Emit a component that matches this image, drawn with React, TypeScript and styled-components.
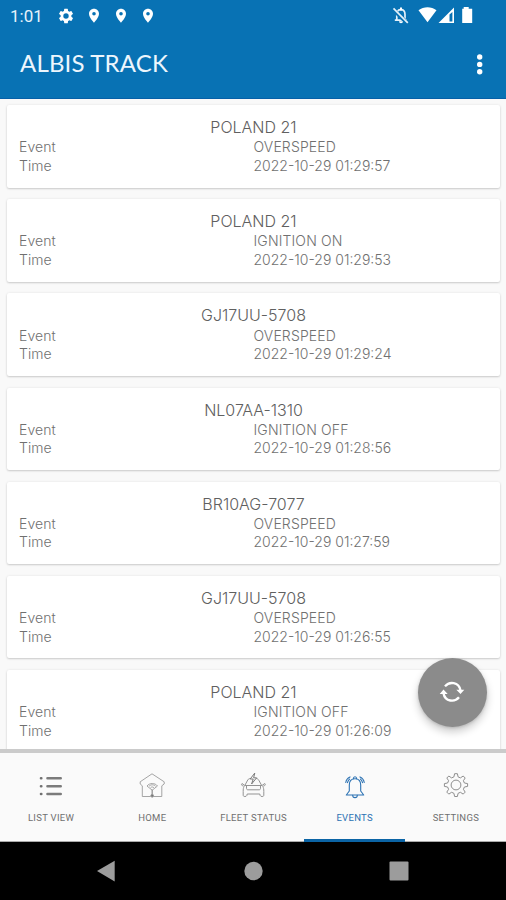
import React from 'react';
import styled, { createGlobalStyle } from 'styled-components';

const GlobalStyle = createGlobalStyle`
  * { box-sizing: border-box; }
  body { margin: 0; background: #000; font-family: Inter, "Open Sans", sans-serif; }
`;

const Screen = styled.div`
  position: relative;
  width: 506px;
  height: 900px;
  display: flex;
  flex-direction: column;
  overflow: hidden;
  background: #f9f9f9;
`;

const Header = styled.header`
  flex: 0 0 99px;
  background: #0872b4;
  border-bottom: 1px solid #0660a8;
  color: #fff;
`;

const StatusBar = styled.div`
  height: 32px;
  display: flex;
  align-items: center;
  padding: 0 32px 0 10px;
`;

const Clock = styled.span`
  width: 47px;
  font: 400 17px/32px Roboto, sans-serif;
  color: #e6f3fb;
`;

const StatusLeft = styled.div`
  display: flex;
  align-items: center;
  gap: 11px;
  flex: 1;
`;

const StatusRight = styled.div`
  display: flex;
  align-items: center;
`;

const TitleBar = styled.div`
  height: 66px;
  display: flex;
  align-items: center;
  justify-content: space-between;
  padding: 0 22px 2px 20px;
`;

const Title = styled.h1`
  margin: 0;
  padding-bottom: 2px;
  font: 400 24px/30px Lato, sans-serif;
  letter-spacing: 0.17px;
  color: #edf6fd;
`;

const List = styled.main`
  flex: 1 1 0;
  min-height: 0;
  overflow: hidden;
  padding: 6px 6px 0 7px;
  display: flex;
  flex-direction: column;
  gap: 11.7px;
`;

const Card = styled.article`
  flex: 0 0 82.5px;
  padding: 12px 12px 0;
  border-radius: 2px;
  background: #fff;
  box-shadow: 0 1px 2px rgba(0, 0, 0, 0.17), 0 0 3px rgba(0, 0, 0, 0.07);
`;

const CardTitle = styled.h2`
  margin: 0;
  height: 21.2px;
  font: 300 16px/21px Inter, sans-serif;
  text-align: center;
  color: #606060;
`;

const Row = styled.div`
  display: grid;
  grid-template-columns: 234.5px 1fr;
  height: 18.5px;
  font: 300 14px/18.5px Inter, sans-serif;
  color: #707070;
`;

const Cell = styled.span<{ $spacing?: number }>`
  letter-spacing: ${(p) => p.$spacing ?? 0}px;
  white-space: nowrap;
`;

const RefreshButton = styled.button`
  position: absolute;
  left: 418px;
  top: 658px;
  width: 69px;
  height: 69px;
  padding: 0 1px 1px 0;
  border: 0;
  border-radius: 50%;
  display: grid;
  place-items: center;
  background: #8b8b8b;
  box-shadow: 0 5px 9px rgba(0, 0, 0, 0.2), 0 1px 3px rgba(0, 0, 0, 0.15);
`;

const Tabs = styled.nav`
  flex: 0 0 93px;
  display: grid;
  grid-template-columns: repeat(5, 1fr);
  border-top: 4px solid #cbcbcb;
  background: #fafafa;
`;

const Tab = styled.div<{ $active?: boolean }>`
  display: flex;
  flex-direction: column;
  align-items: center;
  padding: 18px 0 0 1px;
  color: ${(p) => (p.$active ? '#2c72b3' : '#858585')};
  border-bottom: ${(p) => (p.$active ? '3px solid #0b64a5' : '1px solid #aaa')};
`;

const TabLabel = styled.span<{ $active?: boolean }>`
  margin-top: 10px;
  font: 400 9.5px/14px Roboto, sans-serif;
  letter-spacing: 0.3px;
  white-space: nowrap;
  color: ${(p) => (p.$active ? '#2c72b3' : '#707070')};
`;

const SystemNav = styled.footer`
  flex: 0 0 58px;
  display: flex;
  align-items: center;
  justify-content: space-between;
  padding: 0 97px 0 96px;
  background: #000;
`;

const Cog = () => (
  <svg width="18" height="18" viewBox="0 0 24 24" fill="#fff">
    <path d="M19.14 12.94c.04-.3.06-.61.06-.94s-.02-.64-.07-.94l2.03-1.58a.49.49 0 0 0 .12-.61l-1.92-3.32a.49.49 0 0 0-.59-.22l-2.39.96a7 7 0 0 0-1.62-.94l-.36-2.54a.48.48 0 0 0-.48-.41h-3.84a.48.48 0 0 0-.47.41l-.36 2.54c-.59.24-1.13.57-1.62.94l-2.39-.96a.48.48 0 0 0-.59.22L2.74 8.87a.48.48 0 0 0 .12.61l2.03 1.58a7 7 0 0 0 0 1.88l-2.03 1.58a.49.49 0 0 0-.12.61l1.92 3.32c.12.22.37.29.59.22l2.39-.96c.5.38 1.03.7 1.62.94l.36 2.54c.05.24.24.41.48.41h3.84c.24 0 .44-.17.47-.41l.36-2.54c.59-.24 1.13-.56 1.62-.94l2.39.96c.22.08.47 0 .59-.22l1.92-3.32a.48.48 0 0 0-.12-.61zM12 15.6A3.6 3.6 0 1 1 12 8.4a3.6 3.6 0 0 1 0 7.2z" />
  </svg>
);

const Pin = () => (
  <svg width="16" height="16" viewBox="0 0 24 24" fill="#fff">
    <path d="M12 1C7.8 1 4.5 4.3 4.5 8.5 4.5 14 12 22 12 22s7.500-8 7.500-13.500C19.500 4.300 16.200 1 12 1zm0 10.300a2.700 2.700 0 1 1 0-5.400 2.700 2.700 0 0 1 0 5.400z" />
  </svg>
);

const StatusIcons = () => (
  <svg width="86" height="22" viewBox="388 5 86 22">
    <g fill="none" stroke="#e4f1fa" strokeWidth="1.7">
      <path d="M396.8 20V14.5c0-3 1.500-4.800 4.100-4.800s4.100 1.800 4.100 4.800V20M394.800 20.200h12" />
      <path d="M393 9.200l14.500 14.200" stroke="#0872b4" strokeWidth="4" />
      <path d="M393.500 8.300l14.300 14.600" />
    </g>
    <g fill="#fff">
      <path d="M399 21.300h4a2 2 0 0 1-4 0zM400 7.500h2v3h-2z" />
      <path d="M418.500 10.300c5.200-4.100 12.800-4.100 18 0L427.500 22.200z" />
      <path fillRule="evenodd" d="M438.500 23L454 7.500V23zM449.500 14.500V21.500H452.400V12z" />
      <path d="M463.700 7h5v1.800h3.500V23h-10V8.800h1.500z" />
    </g>
  </svg>
);

const MoreIcon = () => (
  <svg width="8" height="24" viewBox="0 0 8 24" fill="#fff">
    <circle cx="3.7" cy="5" r="2.7" />
    <circle cx="3.7" cy="12.4" r="2.7" />
    <circle cx="3.7" cy="19.8" r="2.7" />
  </svg>
);

const RefreshIcon = () => (
  <svg width="28" height="28" viewBox="0 0 28 28" fill="none" stroke="#fff" strokeWidth="2.3">
    <path d="M7 8.4C11.200 3.200 21 3.700 22.500 12.500" />
    <path d="M21 19.300C16.800 24.500 7 24 5.500 15.200" />
    <path d="M18.300 11.800h8L22.500 16zM9.700 16h-8l3.800-4.500z" fill="#fff" stroke="none" />
  </svg>
);

const ListIcon = () => (
  <svg width="30" height="30" viewBox="0 0 30 30" strokeLinecap="round" fill="none">
    <path d="M11.500 7.300h13.200M11.500 15.200h13.200M11.500 23h13.200" stroke="#7b7b7b" strokeWidth="2.600" />
    <path d="M5 7.300h.3M5 15.200h.3M5 23h.3" stroke="#707070" strokeWidth="2.600" />
  </svg>
);

const HomeIcon = () => (
  <svg width="30" height="30" viewBox="0 0 30 30" fill="none" stroke="#9b9b9b" strokeWidth="0.9">
    <path d="M5.300 25.500V14.800L3.200 13V10.800L15 2.800l12.200 8V13l-2.400 1.800v10.700h-8.400M5.300 25.500h8.400" />
    <path d="M10 15c2.500-3.300 8-3.300 10.500 0l-5.300 4.200z M12 15.300c1.800-2 5-2 6.600 0M13.500 16.800c1-1.100 2.400-1.100 3.500 0" />
    <path d="M15.200 18.800V24" strokeWidth="1.400" />
    <circle cx="15.200" cy="24.800" r="1.400" fill="#777" />
  </svg>
);

const CarIcon = () => (
  <svg width="30" height="30" viewBox="0 0 30 30" fill="none" stroke="#939393" strokeWidth="1" strokeLinejoin="round">
    <path d="M6.800 14.500l3-5.600c.7-1.100 1.500-1.300 3-1.400M18.200 7.500c1.200.1 2 .6 2.600 1.700l2.900 5.300M6.800 14.500H24M6.800 14.500L4 12.500c-1 .9-.5 2.300 1.500 2.600M24 14.500l2.800-2c1 .9.500 2.300-1.500 2.600M6.200 15.200c-1 1.700-1 3.200-1 5.200v4c0 1.500 3.200 1.500 3.700 0l.3-1.400h12.600l.3 1.400c.5 1.500 3.700 1.500 3.700 0v-4c0-2-.1-3.500-1.100-5.200M8.500 15v2.300c0 1 .5 1.500 1.500 1.500h11c1 0 1.500-.5 1.500-1.500V15" />
    <path d="M16.800 2l-4.600 6h3l-1.600 5 5-6.200h-3z" stroke="#7b7b7b" />
  </svg>
);

const BellIcon = () => (
  <svg width="30" height="30" viewBox="0 0 30 30" fill="none" stroke="currentColor" strokeWidth="1.1" strokeLinecap="round" strokeLinejoin="round">
    <path d="M15 7.700c-4 0-5.700 2.400-5.700 6.300v6l-3 4h17.400l-3-4v-6c0-3.900-1.700-6.300-5.700-6.300z" />
    <path d="M13.400 7.700c0-2.600 3.200-2.600 3.200 0M12.700 24.200c0 3.200 4.600 3.200 4.600 0M5.800 11.500c.3-2.700 1.900-4.600 4.200-5.600M24.200 11.500c-.3-2.700-1.900-4.600-4.200-5.600M7.500 11.600c.3-1.400.9-2.400 2-3.400M22.500 11.600c-.3-1.400-.9-2.400-2-3.400" />
  </svg>
);

const SettingsIcon = () => (
  <svg width="30" height="30" viewBox="0 0 30 30" fill="none" stroke="#8e8e8e" strokeWidth="1" strokeLinejoin="round">
    <circle cx="15" cy="14" r="4.900" />
    <path d="M12.900 5.900l.7-3.200h2.800l.7 3.200 2.300 1L22.200 5l2 2-1.800 2.700 1 2.300 3.200.6v2.800l-3.200.6-1 2.300 1.800 2.800-2 2-2.800-1.800-2.300 1-.7 3.200h-2.800l-.7-3.200-2.300-1-2.800 1.800-2-2 1.800-2.800-1-2.300-3.200-.6v-2.800l3.200-.6 1-2.300L5.800 7l2-2 2.800 1.900z" />
  </svg>
);

const events = [
  ['POLAND 21', 'OVERSPEED', '2022-10-29 01:29:57'],
  ['POLAND 21', 'IGNITION ON', '2022-10-29 01:29:53'],
  ['GJ17UU-5708', 'OVERSPEED', '2022-10-29 01:29:24'],
  ['NL07AA-1310', 'IGNITION OFF', '2022-10-29 01:28:56'],
  ['BR10AG-7077', 'OVERSPEED', '2022-10-29 01:27:59'],
  ['GJ17UU-5708', 'OVERSPEED', '2022-10-29 01:26:55'],
  ['POLAND 21', 'IGNITION OFF', '2022-10-29 01:26:09'],
];

const tabs = [
  { label: 'LIST VIEW', Icon: ListIcon },
  { label: 'HOME', Icon: HomeIcon },
  { label: 'FLEET STATUS', Icon: CarIcon },
  { label: 'EVENTS', Icon: BellIcon, active: true },
  { label: 'SETTINGS', Icon: SettingsIcon },
];

export default function App() {
  return (
    <>
      <GlobalStyle />
      <Screen>
        <Header>
          <StatusBar>
            <Clock>1:01</Clock>
            <StatusLeft>
              <Cog />
              <Pin />
              <Pin />
              <Pin />
            </StatusLeft>
            <StatusRight>
              <StatusIcons />
            </StatusRight>
          </StatusBar>
          <TitleBar>
            <Title>ALBIS TRACK</Title>
            <MoreIcon />
          </TitleBar>
        </Header>
        <List>
          {events.map(([name, event, time]) => (
            <Card key={time}>
              <CardTitle>{name}</CardTitle>
              <Row>
                <Cell $spacing={0.1}>Event</Cell>
                <Cell $spacing={0.15}>{event}</Cell>
              </Row>
              <Row>
                <Cell>Time</Cell>
                <Cell>{time}</Cell>
              </Row>
            </Card>
          ))}
        </List>
        <Tabs>
          {tabs.map(({ label, Icon, active }) => (
            <Tab key={label} $active={active}>
              <Icon />
              <TabLabel $active={active}>{label}</TabLabel>
            </Tab>
          ))}
        </Tabs>
        <SystemNav>
          <svg width="20" height="22" viewBox="0 0 20 22" fill="#9c9c9c">
            <path d="M1 11L18.700 .8v20.600z" />
          </svg>
          <svg width="20" height="20" viewBox="0 0 20 20" fill="#9c9c9c">
            <circle cx="10.5" cy="10" r="9.200" />
          </svg>
          <svg width="20" height="20" viewBox="0 0 20 20" fill="#9c9c9c">
            <rect x=".5" y=".5" width="19" height="19" rx="1" />
          </svg>
        </SystemNav>
        <RefreshButton aria-label="Refresh">
          <RefreshIcon />
        </RefreshButton>
      </Screen>
    </>
  );
}
